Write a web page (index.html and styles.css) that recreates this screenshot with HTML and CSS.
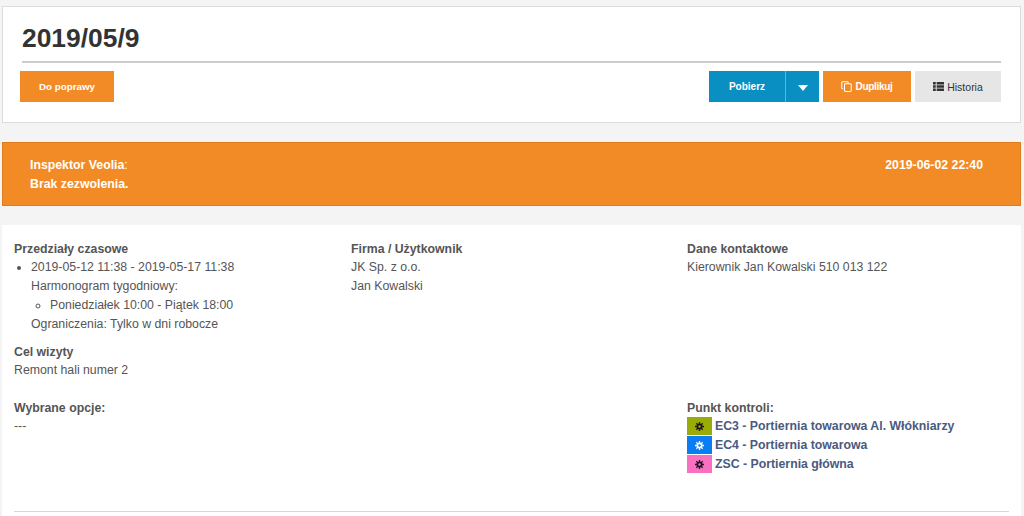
FILE: index.html
```html
<!DOCTYPE html>
<html lang="pl">
<head>
    <meta charset="UTF-8">
    <meta name="viewport" content="width=device-width, initial-scale=1.0">
    <title>2019/05/9</title>
    <link rel="stylesheet" href="styles.css">
</head>
<body>
    <svg class="defs" width="0" height="0">
        <symbol id="gear" viewBox="0 0 10 10">
            <circle cx="5" cy="5" r="2.400" fill="none" stroke="currentColor" stroke-width="1.900"/>
            <path stroke="currentColor" stroke-width="1.500" d="M5 0v2M5 8v2M0 5h2M8 5h2M1.500 1.500l1.400 1.400M7.100 7.100l1.400 1.400M8.500 1.500L7.100 2.900M2.900 7.100L1.500 8.500"/>
        </symbol>
    </svg>

    <div class="card">
        <h1 class="title">2019/05/9</h1>
        <div class="actions">
            <button class="btn btn-orange btn-status">Do poprawy</button>
            <div class="actions-right">
                <div class="split">
                    <button class="btn btn-blue btn-main">Pobierz</button>
                    <button class="btn btn-blue btn-caret"><span class="caret"></span></button>
                </div>
                <button class="btn btn-orange btn-copy">
                    <svg class="ico" viewBox="0 0 12 12" fill="none" stroke="currentColor" stroke-width="1.100"><path d="M2.500 8.500H1.800a1 1 0 0 1-1-1V1.800a1 1 0 0 1 1-1h5a1 1 0 0 1 1 1v.7"/><rect x="3.800" y="3" width="7.400" height="8.400" rx="1"/></svg>
                    Duplikuj
                </button>
                <button class="btn btn-gray">
                    <svg class="ico" viewBox="0 0 12 10" fill="currentColor"><path d="M0 0h3v2.800H0zM4 0h8v2.800H4zM0 3.600h3v2.800H0zM4 3.600h8v2.800H4zM0 7.200h3V10H0zM4 7.200h8V10H4z"/></svg>
                    Historia
                </button>
            </div>
        </div>
    </div>

    <div class="alert">
        <div class="alert-text">
            <div>Inspektor Veolia<span class="thin">:</span></div>
            <div>Brak zezwolenia.</div>
        </div>
        <div>2019-06-02 22:40</div>
    </div>

    <div class="details">
        <div class="row row-top">
            <div class="col">
                <b>Przedziały czasowe</b>
                <ul class="list">
                    <li>2019-05-12 11:38 - 2019-05-17 11:38
                        <div>Harmonogram tygodniowy:</div>
                        <ul class="sublist"><li>Poniedziałek 10:00 - Piątek 18:00</li></ul>
                        <div>Ograniczenia: Tylko w dni robocze</div>
                    </li>
                </ul>
            </div>
            <div class="col">
                <b>Firma / Użytkownik</b>
                <div>JK Sp. z o.o.</div>
                <div>Jan Kowalski</div>
            </div>
            <div class="col">
                <b>Dane kontaktowe</b>
                <div>Kierownik Jan Kowalski 510 013 122</div>
            </div>
        </div>
        <div class="purpose">
            <b>Cel wizyty</b>
            <div>Remont hali numer 2</div>
        </div>
        <div class="row row-bottom">
            <div class="col">
                <b>Wybrane opcje:</b>
                <div>---</div>
            </div>
            <div class="col"></div>
            <div class="col">
                <b>Punkt kontroli:</b>
                <a class="point"><span class="tag tag-olive"><svg><use href="#gear"/></svg></span>EC3 - Portiernia towarowa Al. Włókniarzy</a>
                <a class="point"><span class="tag tag-blue"><svg><use href="#gear"/></svg></span>EC4 - Portiernia towarowa</a>
                <a class="point"><span class="tag tag-pink"><svg><use href="#gear"/></svg></span>ZSC - Portiernia główna</a>
            </div>
        </div>
        <hr class="divider">
    </div>
</body>
</html>
```

FILE: styles.css
```css
html, body {
    height: 100%;
    overflow: hidden;
}
body {
    margin: 0;
    padding: 6px 3px 0 2px;
    box-sizing: border-box;
    font-family: "Liberation Sans", Arial, sans-serif;
    font-size: 12.300px;
    line-height: 19px;
    color: #555;
    background-color: #f4f4f5;
}
.defs {
    position: absolute;
}
.card {
    height: 117px;
    box-sizing: border-box;
    padding: 0 19px 0 17px;
    background: #fff;
    border: 1px solid #dcdcdc;
}
.title {
    margin: 0 0 0 2px;
    height: 56px;
    box-sizing: border-box;
    padding-top: 14px;
    font-size: 26.400px;
    line-height: 34px;
    font-weight: bold;
    color: #333;
    border-bottom: 2px solid #ccc;
}
.actions {
    display: flex;
    justify-content: space-between;
    margin-top: 8px;
}
.actions-right {
    display: flex;
    gap: 4px;
}
.split {
    display: flex;
}
.btn {
    display: flex;
    align-items: center;
    justify-content: center;
    gap: 3px;
    height: 31px;
    padding: 0;
    border: 0;
    font-family: inherit;
    font-size: 10px;
    font-weight: bold;
    color: #fff;
}
.btn-orange {
    background-color: #f28b26;
}
.btn-blue {
    background-color: #0a8fc2;
}
.btn-gray {
    width: 86px;
    font-size: 10.500px;
    font-weight: normal;
    color: #333;
    background-color: #e6e6e6;
}
.btn-status {
    width: 94px;
    font-size: 9.800px;
}
.btn-main {
    width: 76px;
}
.btn-caret {
    width: 34px;
    border-left: 1px solid #5bb5dc;
}
.btn-copy {
    width: 88px;
    letter-spacing: -0.300px;
}
.caret {
    margin-top: 3px;
    border-top: 6px solid #fff;
    border-left: 5.500px solid transparent;
    border-right: 5.500px solid transparent;
}
.ico {
    width: 11px;
    height: 11px;
}
.alert {
    display: flex;
    justify-content: space-between;
    height: 64px;
    box-sizing: border-box;
    margin-top: 19px;
    padding: 13px 37px 0 27px;
    font-weight: bold;
    line-height: 19px;
    color: #fff;
    background-color: #f28b26;
    border: 1px solid #e07c1c;
}
.thin {
    font-weight: normal;
}
.details {
    margin-top: 19px;
    padding: 15px 12px 0;
    background: #fff;
    height: 300px;
}
.row {
    display: grid;
    grid-template-columns: 337px 336px 336px;
}
.row-top {
    height: 103px;
}
.row-bottom {
    margin-top: 19px;
}
b {
    display: block;
    height: 18px;
    line-height: 18px;
    font-weight: bold;
}
.list {
    margin: 0;
    padding-left: 17px;
}
.sublist {
    margin: 0;
    padding-left: 19px;
    list-style-type: circle;
}
.point {
    display: flex;
    height: 19px;
    font-weight: bold;
    color: #4a5a80;
}
.tag {
    display: flex;
    align-items: center;
    justify-content: center;
    width: 25px;
    height: 18px;
    margin-right: 3px;
    color: #1a1020;
}
.tag svg {
    width: 9px;
    height: 9px;
}
.tag-olive {
    background-color: #99ab05;
}
.tag-blue {
    background-color: #0a7df5;
    color: #fff;
}
.tag-pink {
    background-color: #f870bf;
}
.divider {
    margin: 37px 0 0;
    border: 0;
    border-top: 1px solid #d8d8d8;
}
```
